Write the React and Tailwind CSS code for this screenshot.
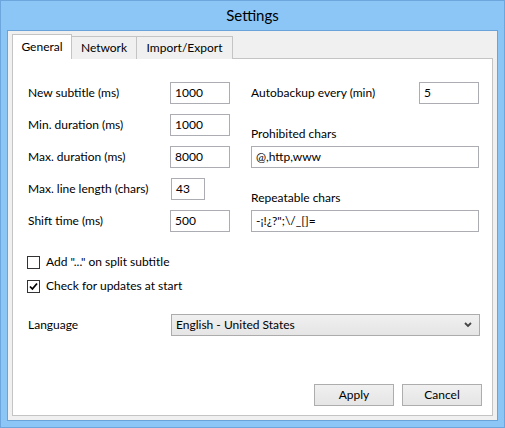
import React from "react";

const font = { fontFamily: "Lato, 'Noto Sans', sans-serif" };

function TextBox({ value, w }) {
  return (
    <div className={`h-[22px] ${w} border border-[#ABADB3] bg-white flex items-center pl-[4px] text-[12px] text-black`}>
      {value}
    </div>
  );
}

function Row({ label, value, w = "w-[60px]" }) {
  return (
    <div className="flex items-center justify-between h-[22px]">
      <span>{label}</span>
      <TextBox value={value} w={w} />
    </div>
  );
}

function Check({ checked, label }) {
  return (
    <div className="flex items-center h-[24px]">
      <div className="w-[13px] h-[13px] border border-[#333333] bg-white flex items-center justify-center">
        {checked && (
          <svg width="9" height="9" viewBox="0 0 9 9">
            <path d="M1 4.5 L3.4 7 L8 1.5" stroke="#000" strokeWidth="1.8" fill="none" />
          </svg>
        )}
      </div>
      <span className="ml-[6px]">{label}</span>
    </div>
  );
}

function Button({ children }) {
  return (
    <div className="w-[80px] h-[22px] border border-[#ADADAD] bg-gradient-to-b from-[#F0F0F0] to-[#E5E5E5] flex items-center justify-center">
      {children}
    </div>
  );
}

export default function App() {
  return (
    <div
      className="w-[505px] h-[428px] bg-[#8CC6F7] border border-[#6DA6DD] flex flex-col text-[12px] text-black"
      style={font}
    >
      <div className="h-[29px] flex items-center justify-center text-[15px] text-black">Settings</div>
      <div className="flex-1 mx-[6px] mb-[6px] border border-[#6AA3D8] bg-[#F0F0F0] flex flex-col pt-[3px] px-[4px] pb-[4px]">
        <div className="flex items-end h-[25px] relative z-10">
          <div className="w-[60px] h-[25px] bg-white border border-b-0 border-[#C4C4C4] flex items-center justify-center">
            General
          </div>
          <div className="w-[65px] h-[23px] bg-[#F0F0F0] border border-l-0 border-b-0 border-[#C4C4C4] flex items-center justify-center">
            Network
          </div>
          <div className="w-[96px] h-[23px] bg-[#F0F0F0] border border-l-0 border-b-0 border-[#C4C4C4] flex items-center justify-center">
            Import/Export
          </div>
        </div>
        <div className="flex-1 -mt-px bg-white border border-[#C4C4C4] flex flex-col">
          <div className="pt-[23px] pl-[15px] pr-[12px] flex gap-[21px]">
            <div className="w-[202px] flex flex-col gap-[10px]">
              <Row label="New subtitle (ms)" value="1000" />
              <Row label="Min. duration (ms)" value="1000" />
              <Row label="Max. duration (ms)" value="8000" />
              <div className="flex items-center h-[22px]">
                <span className="w-[143px]">Max. line length (chars)</span>
                <TextBox value="43" w="w-[34px]" />
              </div>
              <Row label="Shift time (ms)" value="500" />
            </div>
            <div className="w-[228px] flex flex-col">
              <Row label="Autobackup every (min)" value="5" />
              <div className="mt-[22px] h-[16px] mb-[4px] flex items-center">Prohibited chars</div>
              <TextBox value="@,http,www" w="w-[228px]" />
              <div className="mt-[22px] h-[16px] mb-[4px] flex items-center">Repeatable chars</div>
              <TextBox value={"-¡!¿?\";\\/_[]="} w="w-[228px]" />
            </div>
          </div>
          <div className="pl-[14px] mt-[18px] flex flex-col">
            <Check label={'Add "..." on split subtitle'} />
            <Check checked label="Check for updates at start" />
          </div>
          <div className="mt-[16px] pl-[15px] pr-[12px] flex items-center">
            <span className="w-[143px]">Language</span>
            <div className="flex-1 h-[22px] border border-[#ACACAC] bg-gradient-to-b from-[#F0F0F0] to-[#E5E5E5] flex items-center justify-between pl-[4px] pr-[7px]">
              <span>English - United States</span>
              <svg width="8" height="6" viewBox="0 0 8 6">
                <path d="M1 1 L4 4 L7 1" stroke="#444" strokeWidth="1.8" fill="none" />
              </svg>
            </div>
          </div>
          <div className="mt-auto mb-[9px] pr-[10px] flex justify-end gap-[8px]">
            <Button>Apply</Button>
            <Button>Cancel</Button>
          </div>
        </div>
      </div>
    </div>
  );
}
